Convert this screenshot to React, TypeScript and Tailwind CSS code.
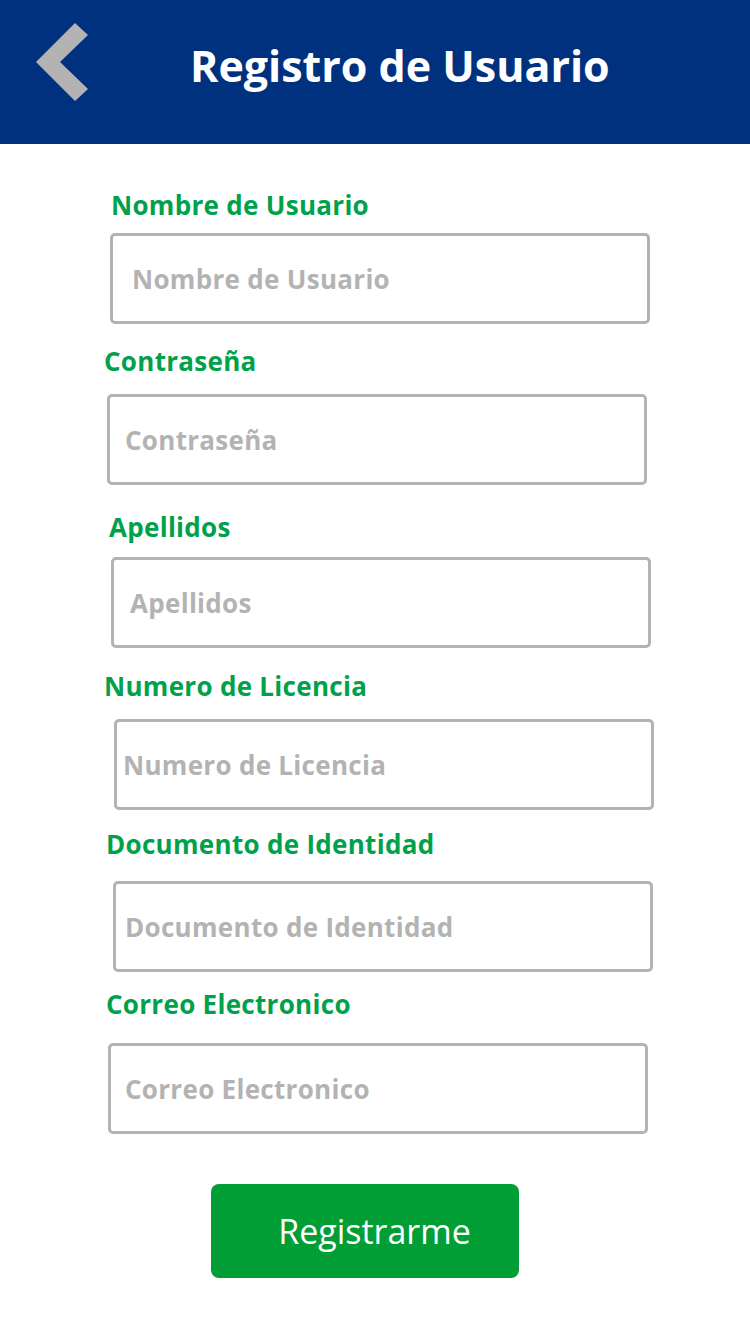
import type { CSSProperties } from "react";

type Field = {
  label: string;
  labelClass: string;
  boxClass: string;
  inputClass: string;
};

const fields: Field[] = [
  {
    label: "Nombre de Usuario",
    labelClass: "mt-[48px] ml-[111px] mb-[15px]",
    boxClass: "ml-[110px]",
    inputClass: "pl-[19px]",
  },
  {
    label: "Contraseña",
    labelClass: "mt-[24px] ml-[104px] mb-[20px]",
    boxClass: "ml-[107px]",
    inputClass: "pl-[15px]",
  },
  {
    label: "Apellidos",
    labelClass: "mt-[29px] ml-[109px] mb-[17px]",
    boxClass: "ml-[111px]",
    inputClass: "pl-[16px]",
  },
  {
    label: "Numero de Licencia",
    labelClass: "mt-[25px] ml-[104px] mb-[20px]",
    boxClass: "ml-[114px]",
    inputClass: "pl-[6px]",
  },
  {
    label: "Documento de Identidad",
    labelClass: "mt-[21px] ml-[106px] mb-[24px]",
    boxClass: "ml-[113px]",
    inputClass: "pl-[9px]",
  },
  {
    label: "Correo Electronico",
    labelClass: "mt-[19px] ml-[106px] mb-[26px]",
    boxClass: "ml-[108px]",
    inputClass: "pl-[14px]",
  },
];

const font: CSSProperties = { fontFamily: "'Open Sans', Lato, sans-serif" };

function BackChevron() {
  return (
    <svg width="54" height="80" viewBox="0 0 54 80" className="mt-[22px] ml-[35px] shrink-0">
      <polygon points="40,1 53,13 25,40 53,67 40,79 1,40" fill="#b3b3b3" />
    </svg>
  );
}

export default function App() {
  return (
    <div className="min-h-[1334px] w-[750px] bg-white" style={font}>
      <header className="flex h-[144px] items-start bg-[#00317f]">
        <BackChevron />
        <h1 className="mt-[44px] ml-[101px] text-[43px] leading-none font-bold text-white">
          Registro de Usuario
        </h1>
      </header>

      <form className="flex flex-col" onSubmit={(e) => e.preventDefault()}>
        {fields.map((f) => (
          <div key={f.label} className="flex flex-col">
            <label
              className={`text-[26px] leading-none font-bold tracking-[0.3px] text-[#00a14b] ${f.labelClass}`}
            >
              {f.label}
            </label>
            <div
              className={`h-[91px] w-[540px] rounded-[5px] border-[3px] border-[#b3b3b3] ${f.boxClass}`}
            >
              <input
                type="text"
                placeholder={f.label}
                className={`h-full w-full bg-transparent text-[26px] font-bold tracking-[0.3px] text-[#b3b3b3] outline-none placeholder:text-[#b3b3b3] ${f.inputClass}`}
                style={font}
              />
            </div>
          </div>
        ))}

        <button
          type="submit"
          className="mt-[50px] ml-[211px] flex h-[94px] w-[308px] items-center justify-center rounded-[8px] bg-[#009e35] pl-[19px] text-[34px] font-normal text-white"
          style={font}
        >
          Registrarme
        </button>
      </form>
    </div>
  );
}
